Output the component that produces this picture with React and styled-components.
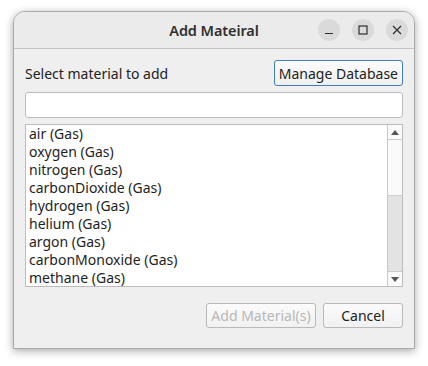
import React, { useState } from "react";
import styled, { createGlobalStyle } from "styled-components";

const GlobalStyle = createGlobalStyle`
  html, body {
    margin: 0;
    padding: 0;
    background: #ffffff;
  }
  body {
    font-family: "Noto Sans", "DejaVu Sans", sans-serif;
    font-size: 14px;
    color: #1e1e1e;
  }
`;

const Stage = styled.div`
  width: 428px;
  height: 366px;
  padding: 11px 0 0 13px;
  box-sizing: border-box;
`;

const Window = styled.div`
  width: 402px;
  height: 338px;
  display: flex;
  flex-direction: column;
  background: #efefef;
  border: 1px solid #a9a9a9;
  border-radius: 12px 12px 0 0;
  box-shadow: 0 2px 8px rgba(0, 0, 0, 0.35);
  overflow: hidden;
  box-sizing: border-box;
`;

const TitleBar = styled.div`
  position: relative;
  height: 37px;
  flex: none;
  display: flex;
  align-items: center;
  justify-content: center;
  background: #ebebeb;
  border-bottom: 1px solid #c4c4c4;
  box-sizing: border-box;
`;

const Title = styled.div`
  font-family: "Noto Sans", sans-serif;
  font-size: 14.5px;
  font-weight: 600;
  color: #303030;
  letter-spacing: -0.1px;
`;

const Controls = styled.div`
  position: absolute;
  right: 6px;
  top: 7px;
  display: flex;
  gap: 12px;
`;

const CtrlButton = styled.div`
  width: 22px;
  height: 22px;
  border-radius: 50%;
  background: #dadada;
  display: flex;
  align-items: center;
  justify-content: center;
`;

const Body = styled.div`
  flex: 1;
  display: flex;
  flex-direction: column;
  padding: 10px 11px 0 11px;
`;

const TopRow = styled.div`
  display: flex;
  align-items: center;
  justify-content: space-between;
  height: 28px;
`;

const Label = styled.span`
  font-size: 14px;
  color: #222;
`;

const Button = styled.button`
  font-family: "Noto Sans", sans-serif;
  font-size: 14px;
  height: ${(p) => p.$h || 25}px;
  padding: 0 ${(p) => p.$px || 4}px;
  border-radius: 3px;
  border: 1px solid ${(p) => (p.$focus ? "#3d7fc0" : "#b9b9b9")};
  background: linear-gradient(#fbfbfb, #f1f1f1);
  color: ${(p) => (p.$disabled ? "#b8b8b8" : "#222")};
  box-sizing: border-box;
  cursor: default;
  width: ${(p) => (p.$w ? `${p.$w}px` : "auto")};
  display: flex;
  align-items: center;
  justify-content: center;
  white-space: nowrap;
`;

const SearchInput = styled.input`
  margin-top: 5px;
  height: 26px;
  width: 100%;
  box-sizing: border-box;
  border: 1px solid #bcbcbc;
  border-radius: 3px;
  background: #fff;
  font-family: "Noto Sans", sans-serif;
  font-size: 14px;
  outline: none;
`;

const ListBox = styled.div`
  margin-top: 6px;
  height: 163px;
  display: flex;
  border: 1px solid #bcbcbc;
  background: #fff;
  box-sizing: border-box;
`;

const Items = styled.div`
  flex: 1;
  padding: 0 0 0 3px;
  overflow: hidden;
`;

const Item = styled.div`
  height: 18px;
  line-height: 18px;
  font-size: 14px;
  color: #1e1e1e;
  white-space: nowrap;
`;

const ScrollBar = styled.div`
  width: 14px;
  display: flex;
  flex-direction: column;
  border-left: 1px solid #c9c9c9;
  background: #e3e3e3;
`;

const Arrow = styled.div`
  height: 14px;
  flex: none;
  background: #fafafa;
  border-${(p) => (p.$up ? "bottom" : "top")}: 1px solid #c9c9c9;
  display: flex;
  align-items: center;
  justify-content: center;
`;

const Thumb = styled.div`
  height: 55px;
  background: #fafafa;
  border-bottom: 1px solid #d0d0d0;
`;

const Track = styled.div`
  flex: 1;
`;

const Footer = styled.div`
  display: flex;
  justify-content: flex-end;
  gap: 7px;
  margin-top: 16px;
`;

const materials = [
  "air",
  "oxygen",
  "nitrogen",
  "carbonDioxide",
  "hydrogen",
  "helium",
  "argon",
  "carbonMonoxide",
  "methane",
];

export default function App() {
  const [query, setQuery] = useState("");

  return (
    <>
      <GlobalStyle />
      <Stage>
        <Window>
          <TitleBar>
            <Title>Add Mateiral</Title>
            <Controls>
              <CtrlButton>
                <svg width="10" height="10" viewBox="0 0 10 10">
                  <path d="M1 8.5h8" stroke="#2e2e2e" strokeWidth="1.2" />
                </svg>
              </CtrlButton>
              <CtrlButton>
                <svg width="10" height="10" viewBox="0 0 10 10">
                  <rect x="1" y="1" width="8" height="8" fill="none" stroke="#2e2e2e" strokeWidth="1.2" />
                </svg>
              </CtrlButton>
              <CtrlButton>
                <svg width="10" height="10" viewBox="0 0 10 10">
                  <path d="M1 1l8 8M9 1l-8 8" stroke="#2e2e2e" strokeWidth="1.2" />
                </svg>
              </CtrlButton>
            </Controls>
          </TitleBar>
          <Body>
            <TopRow>
              <Label>Select material to add</Label>
              <Button $focus $h={26} $px={4}>
                Manage Database
              </Button>
            </TopRow>
            <SearchInput value={query} onChange={(e) => setQuery(e.target.value)} />
            <ListBox>
              <Items>
                {materials
                  .filter((m) => m.toLowerCase().includes(query.toLowerCase()))
                  .map((m) => (
                    <Item key={m}>{m} (Gas)</Item>
                  ))}
              </Items>
              <ScrollBar>
                <Arrow $up>
                  <svg width="8" height="5" viewBox="0 0 8 5">
                    <path d="M0 5L4 0L8 5Z" fill="#555" />
                  </svg>
                </Arrow>
                <Thumb />
                <Track />
                <Arrow>
                  <svg width="8" height="5" viewBox="0 0 8 5">
                    <path d="M0 0L4 5L8 0Z" fill="#555" />
                  </svg>
                </Arrow>
              </ScrollBar>
            </ListBox>
            <Footer>
              <Button $disabled $w={110}>
                Add Material(s)
              </Button>
              <Button $w={80}>Cancel</Button>
            </Footer>
          </Body>
        </Window>
      </Stage>
    </>
  );
}
